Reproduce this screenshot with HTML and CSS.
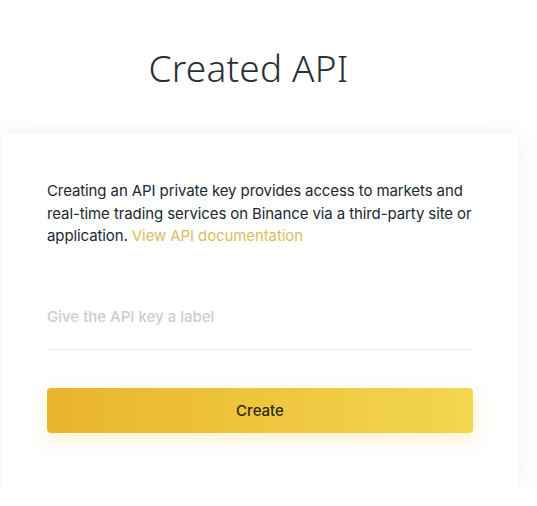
FILE: index.html
```html
<!DOCTYPE html>
<html>
<head>
<meta charset="utf-8">
<link rel="stylesheet" href="styles.css">
</head>
<body>
<div class="page">
  <h1 class="title">Created API</h1>
  <div class="card">
    <p class="intro">Creating an API private key provides access to markets and real-time trading services on Binance via a third-party site or application. <a class="link" href="#">View API documentation</a></p>
    <div class="field">
      <input class="input" type="text" placeholder="Give the API key a label">
    </div>
    <button class="btn">Create</button>
  </div>
</div>
</body>
</html>
```
FILE: styles.css
```css
html, body {
  margin: 0;
  padding: 0;
  background: #ffffff;
}
body {
  font-family: "Inter", "Noto Sans", sans-serif;
  color: #1e2329;
}
.page {
  width: 520px;
  padding-top: 40px;
}
.title {
  margin: 0;
  width: 497px;
  text-align: center;
  font-family: "Noto Sans", sans-serif;
  font-weight: 300;
  font-size: 37px;
  line-height: 56px;
  color: #2b2f36;
  letter-spacing: 0.2px;
}
.card {
  margin: 38px 0 0 2px;
  width: 516px;
  height: 355px;
  box-sizing: border-box;
  padding: 46px 45px 0 45px;
  background: #ffffff;
  border-radius: 4px;
  box-shadow: 0 0 24px rgba(0, 0, 0, 0.06);
}
.intro {
  margin: 0;
  font-size: 15px;
  line-height: 22.5px;
  color: #212833;
  letter-spacing: -0.1px;
}
.link {
  color: #dcbd5c;
  text-decoration: none;
}
.field {
  margin-top: 57px;
  padding-bottom: 20px;
  border-bottom: 1px solid #e6e8ea;
}
.input {
  display: block;
  width: 100%;
  height: 24px;
  box-sizing: border-box;
  border: none;
  outline: none;
  padding: 0;
  font-family: "Inter", "Noto Sans", sans-serif;
  font-size: 15px;
  font-weight: 500;
  color: #1e2329;
  background: transparent;
}
.input::placeholder {
  color: #c9cdd3;
}
.btn {
  display: block;
  margin-top: 38px;
  width: 100%;
  height: 45px;
  border: none;
  border-radius: 4px;
  background: linear-gradient(to right, #e8b52c, #f3d64f);
  box-shadow: 0 6px 20px rgba(240, 200, 60, 0.28);
  font-family: "Inter", "Noto Sans", sans-serif;
  font-size: 15px;
  font-weight: 500;
  color: #2a2818;
  cursor: pointer;
}
```
